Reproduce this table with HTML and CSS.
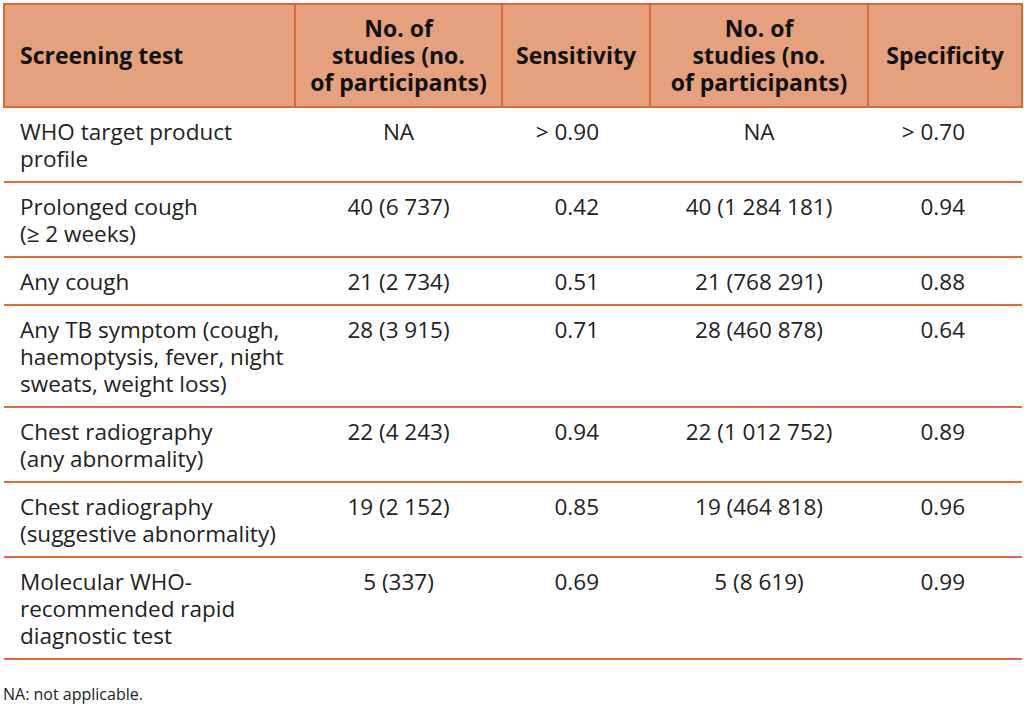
FILE: index.html
```html
<!DOCTYPE html>
<html lang="en">
<head>
<meta charset="utf-8">
<title>Screening tests</title>
<link rel="stylesheet" href="styles.css">
</head>
<body>
<table class="data">
  <colgroup>
    <col class="c1"><col class="c2"><col class="c3"><col class="c4"><col class="c5">
  </colgroup>
  <thead>
    <tr>
      <th class="first">Screening test</th>
      <th>No. of<br>studies (no.<br>of participants)</th>
      <th>Sensitivity</th>
      <th>No. of<br>studies (no.<br>of participants)</th>
      <th>Specificity</th>
    </tr>
  </thead>
  <tbody>
    <tr>
      <td class="name">WHO target product<br>profile</td>
      <td class="num">NA</td>
      <td class="sens">&gt; 0.90</td>
      <td class="num">NA</td>
      <td class="spec">&gt; 0.70</td>
    </tr>
    <tr>
      <td class="name">Prolonged cough<br>(≥ 2 weeks)</td>
      <td class="num">40 (6 737)</td>
      <td class="sens">0.42</td>
      <td class="num">40 (1 284 181)</td>
      <td class="spec">0.94</td>
    </tr>
    <tr>
      <td class="name">Any cough</td>
      <td class="num">21 (2 734)</td>
      <td class="sens">0.51</td>
      <td class="num">21 (768 291)</td>
      <td class="spec">0.88</td>
    </tr>
    <tr>
      <td class="name">Any TB symptom (cough,<br>haemoptysis, fever, night<br>sweats, weight loss)</td>
      <td class="num">28 (3 915)</td>
      <td class="sens">0.71</td>
      <td class="num">28 (460 878)</td>
      <td class="spec">0.64</td>
    </tr>
    <tr>
      <td class="name">Chest radiography<br>(any abnormality)</td>
      <td class="num">22 (4 243)</td>
      <td class="sens">0.94</td>
      <td class="num">22 (1 012 752)</td>
      <td class="spec">0.89</td>
    </tr>
    <tr>
      <td class="name">Chest radiography<br>(suggestive abnormality)</td>
      <td class="num">19 (2 152)</td>
      <td class="sens">0.85</td>
      <td class="num">19 (464 818)</td>
      <td class="spec">0.96</td>
    </tr>
    <tr>
      <td class="name">Molecular WHO-<br>recommended rapid<br>diagnostic test</td>
      <td class="num">5 (337)</td>
      <td class="sens">0.69</td>
      <td class="num">5 (8 619)</td>
      <td class="spec">0.99</td>
    </tr>
  </tbody>
</table>
<p class="note">NA: not applicable.</p>
</body>
</html>
```

FILE: styles.css
```css
html, body {
  margin: 0;
  padding: 0;
  background: #ffffff;
}

body {
  padding: 3px 3px 0 3px;
  font-family: "Open Sans", "Noto Sans", "Liberation Sans", sans-serif;
  color: #222222;
}

.data {
  width: 1018px;
  border-collapse: collapse;
  table-layout: fixed;
  font-size: 22.5px;
  line-height: 27px;
}

.c1 { width: 291px; }
.c2 { width: 207px; }
.c3 { width: 148px; }
.c4 { width: 218px; }
.c5 { width: 154px; }

.data th {
  background: #e5a07e;
  border: 2px solid #d9693a;
  font-size: 23px;
  font-weight: 700;
  color: #111111;
  text-align: center;
  vertical-align: middle;
  padding: 10px 4px 10px 4px;
  white-space: nowrap;
}

.data th.first {
  text-align: left;
  padding-left: 15px;
}

.data td {
  border-bottom: 2px solid #dd6d3b;
  vertical-align: top;
  padding: 10px 14px 9px 14px;
  font-weight: 400;
  white-space: nowrap;
}

.data td.name {
  padding-left: 16px;
  padding-right: 0;
  text-align: left;
}

.data td.num {
  text-align: center;
}

.data td.sens {
  text-align: right;
  padding-right: 51px;
}

.data td.spec {
  text-align: right;
  padding-right: 57px;
}

.note {
  margin: 24px 0 0 0;
  font-size: 16px;
  line-height: 20px;
  color: #222222;
}
```
